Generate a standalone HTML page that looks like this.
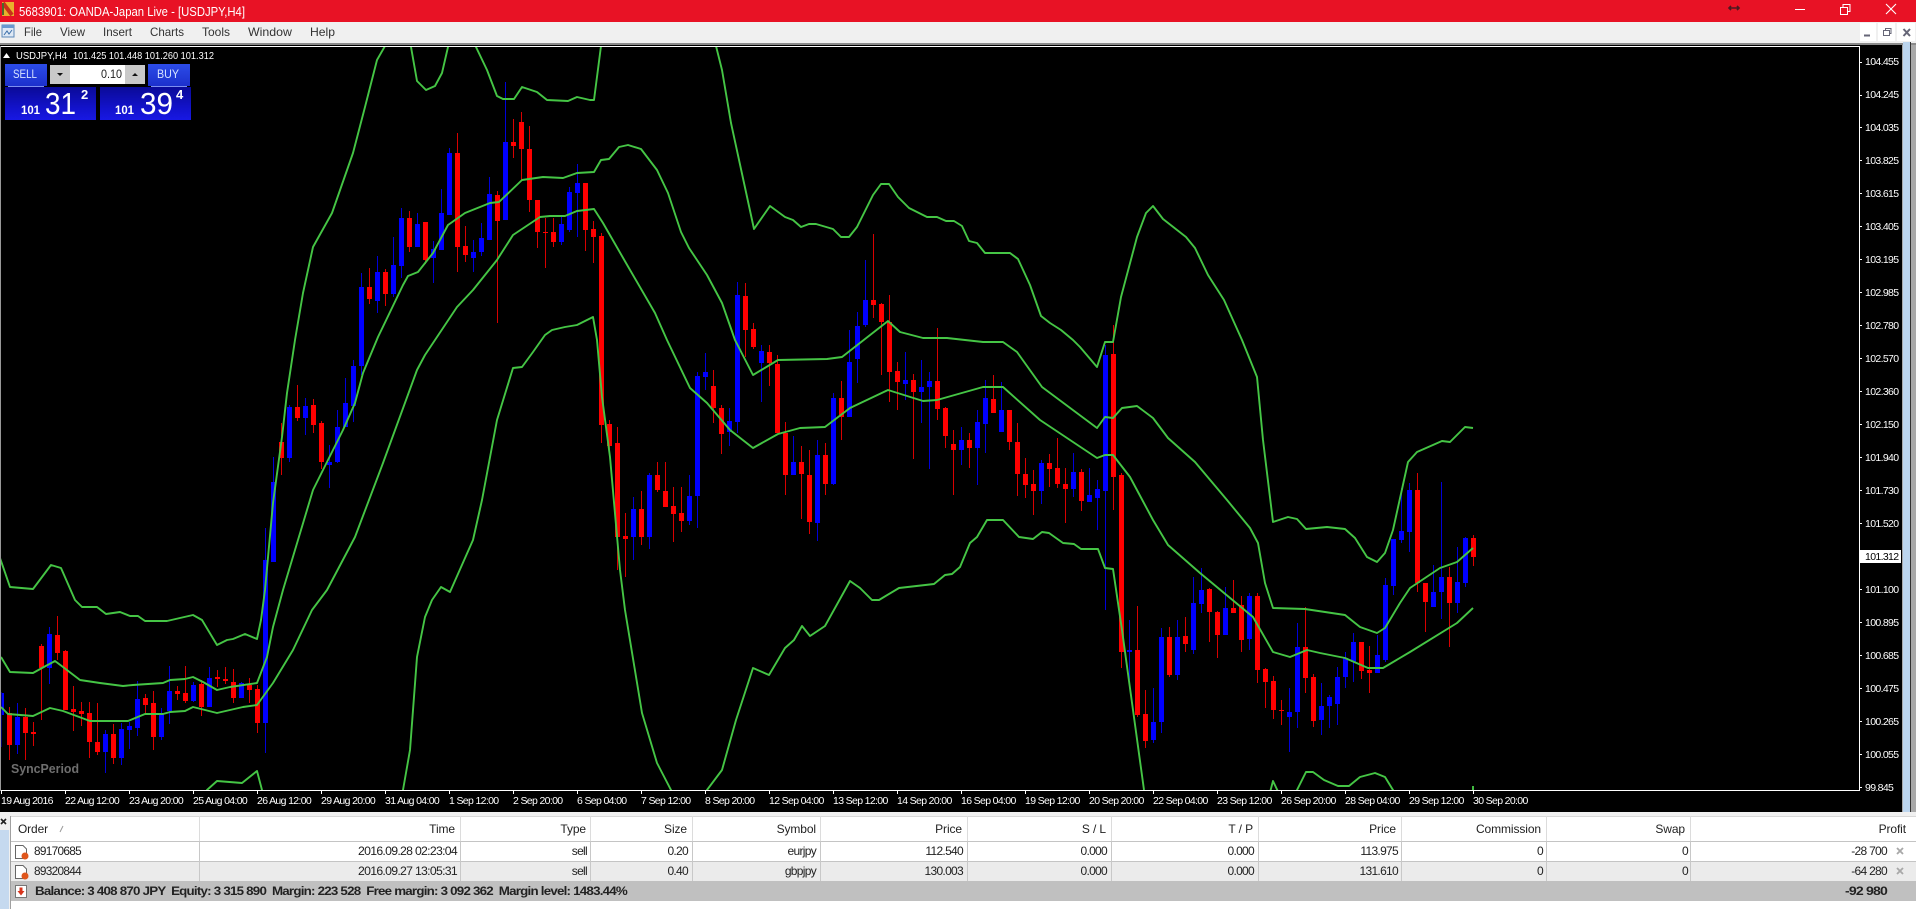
<!DOCTYPE html>
<html><head><meta charset="utf-8"><title>USDJPY,H4</title>
<style>
html,body{margin:0;padding:0;background:#fff;width:1916px;height:909px;overflow:hidden}
svg{display:block;font-family:"Liberation Sans",Arial,sans-serif}
.a{font-size:10.5px;letter-spacing:-.65px;fill:#fff}
.t{font-size:12px;fill:#222;letter-spacing:-.7px}
.h{font-size:12px;fill:#222;letter-spacing:-.1px}
.e{text-anchor:end}
.m{font-size:12px;fill:#333}
.b{font-weight:bold}
</style></head><body>
<svg width="1916" height="909" viewBox="0 0 1916 909" xmlns="http://www.w3.org/2000/svg">
<defs>
<linearGradient id="pb" x1="0" y1="0" x2="0" y2="1"><stop offset="0" stop-color="#0a0a98"/><stop offset=".6" stop-color="#1212c8"/><stop offset="1" stop-color="#1818e4"/></linearGradient>
<linearGradient id="bb" x1="0" y1="0" x2="0" y2="1"><stop offset="0" stop-color="#2c4ce8"/><stop offset="1" stop-color="#1c30cc"/></linearGradient>
<clipPath id="cc"><rect x="1" y="47" width="1858" height="743"/></clipPath>
</defs>

<!-- window chrome -->
<rect width="1916" height="909" fill="#fff"/>
<rect width="1916" height="22" fill="#e81225"/>
<polygon points="2,2 14,2 14,16 2,16" fill="#e9b02c"/>
<path d="M3 3L12 15" stroke="#c8321a" stroke-width="4"/>
<path d="M3 3V15" stroke="#4a6a2a" stroke-width="2"/>
<text x="19" y="16" font-size="13" fill="#fff" textLength="226" lengthAdjust="spacingAndGlyphs">5683901: OANDA-Japan Live - [USDJPY,H4]</text>
<path d="M1729 8H1739M1731 6L1729 8L1731 10M1737 6L1739 8L1737 10" stroke="#4a1a20" stroke-width="1.6" fill="none"/>
<path d="M1795 9.500H1805" stroke="#fff"/>
<path d="M1840.500 7.500H1847.500V14.500H1840.500ZM1843 7V4.500H1850V11.500H1848" stroke="#fff" fill="none"/>
<path d="M1886 4L1896 14M1896 4L1886 14" stroke="#fff" stroke-width="1.1"/>

<rect y="22" width="1916" height="21" fill="#f0f0f0"/>
<rect y="43" width="1916" height="2" fill="#8a8a8a"/>
<rect x="2" y="25" width="12" height="12" fill="#dfe9f5" stroke="#5b88b8"/>
<rect x="2" y="25" width="12" height="3" fill="#6a9ad0"/>
<path d="M4 35L7 31L9 34L12 30" stroke="#3a6ea8" fill="none"/>
<text class="m" x="24" y="36" textLength="18" lengthAdjust="spacingAndGlyphs">File</text>
<text class="m" x="60" y="36" textLength="25" lengthAdjust="spacingAndGlyphs">View</text>
<text class="m" x="103" y="36" textLength="29" lengthAdjust="spacingAndGlyphs">Insert</text>
<text class="m" x="150" y="36" textLength="34" lengthAdjust="spacingAndGlyphs">Charts</text>
<text class="m" x="202" y="36" textLength="28" lengthAdjust="spacingAndGlyphs">Tools</text>
<text class="m" x="248" y="36" textLength="44" lengthAdjust="spacingAndGlyphs">Window</text>
<text class="m" x="310" y="36" textLength="25" lengthAdjust="spacingAndGlyphs">Help</text>
<rect x="1860" y="23" width="16" height="18" fill="#fff"/>
<rect x="1878" y="23" width="17" height="18" fill="#fff"/>
<rect x="1897" y="23" width="18" height="18" fill="#fff"/>
<path d="M1864 35.500H1870" stroke="#667" stroke-width="2"/>
<path d="M1883.500 30.500H1889.500V35.500H1883.500ZM1885.500 30V28.500H1891V33.500H1890" stroke="#667" fill="none"/>
<path d="M1903.500 29L1910 36M1910 29L1903.500 36" stroke="#667" stroke-width="2"/>

<!-- side strip -->
<rect x="1902" y="45" width="14" height="768" fill="#a9a9a9"/>
<rect x="1903" y="42" width="7" height="771" fill="#bcd5ee"/>
<rect x="1910" y="42" width="1" height="771" fill="#333"/>

<!-- chart -->
<rect x="0" y="45" width="1902" height="767" fill="#000"/>
<path d="M1 46.500H1859.500V790.500H1" stroke="#fff" fill="none"/>
<path d="M.5 46V791" stroke="#999"/>

<g transform="translate(.5 0)" clip-path="url(#cc)" shape-rendering="crispEdges" fill="none">
<path stroke="#d80000" d="M9 707V760M25 708V760M33 722V746M41 644V720M57 616V660M65 650V710M73 686V731M81 702V726M89 702V758M97 703V755M113 724V764M145 694V715M153 691V750M177 686V700M185 666V703M201 680V716M217 670V687M225 667V684M233 669V703M249 678V703M257 685V733M281 423V475M297 385V421M313 399V433M321 421V469M369 268V304M385 269V306M409 211V252M425 222V264M457 133V272M465 226V262M497 191V323M513 119V158M521 112V180M529 126V212M537 200V248M545 218V268M553 218V247M585 183V251M593 221V263M601 233V443M609 420V450M617 427V570M625 513V577M641 491V545M657 462V492M665 462V507M673 487V542M681 487V532M713 370V423M721 405V454M745 283V357M753 323V349M769 345V386M777 355V433M785 422V495M801 446V519M809 450V534M825 443V495M841 381V440M873 234V318M881 303V375M889 295V402M897 362V410M913 374V459M937 328V420M945 407V448M953 430V495M969 433V468M993 375V413M1009 410V450M1017 423V496M1025 458V498M1033 470V515M1049 454V487M1057 438V488M1065 468V523M1081 469V511M1113 325V510M1121 473V668M1137 606V717M1145 690V748M1169 627V677M1185 617V652M1209 588V642M1217 611V658M1233 580V613M1241 596V652M1257 593V683M1265 668V708M1273 676V719M1281 700V725M1305 607V693M1313 674V727M1361 642V679M1369 646V693M1417 473V592M1425 583V632M1449 567V647M1473 535V566"/>
<path stroke="#0000d8" d="M1 692V747M17 703V754M49 627V684M105 730V773M121 723V765M129 722V749M137 681V736M161 708V740M169 666V724M193 682V702M209 667V707M241 682V698M265 528V753M273 457V562M289 405V462M305 398V435M329 445V488M337 410V463M345 378V427M353 360V422M361 273V375M377 256V313M393 237V297M401 208V278M417 213V247M433 241V283M441 189V250M449 148V215M473 240V272M481 223V256M489 177V240M505 82V220M561 217V245M569 187V232M577 164V237M633 497V560M649 473V549M689 475V525M697 372V528M705 353V390M729 408V446M737 282V433M761 345V402M793 436V475M817 440V541M833 393V485M849 330V417M857 312V383M865 260V327M905 352V400M921 360V423M929 372V469M961 427V465M977 410V485M985 380V453M1001 382V432M1041 460V504M1073 453V497M1089 468V502M1097 480V530M1105 345V610M1129 620V680M1153 688V743M1161 628V733M1177 620V680M1193 577V654M1201 568V613M1225 587V635M1249 593V650M1289 688V752M1297 623V728M1321 683V735M1329 695V728M1337 667V725M1345 652V688M1353 633V682M1377 635V673M1385 578V662M1393 539V595M1401 488V543M1409 483V552M1433 565V607M1441 482V619M1457 547V613M1465 537V587"/>
<path stroke="#ff0000" stroke-width="5" d="M9 713V745M25 717V733M33 732V734M41 646V668M57 635V653M65 651V710M73 709V712M81 711V714M89 713V742M97 742V752M113 734V758M145 698V705M153 703V737M177 691V694M185 693V701M201 684V707M217 677V679M225 679V681M233 682V698M249 685V690M257 689V723M281 442V458M297 407V418M313 405V425M321 423V462M369 287V299M385 272V294M409 218V247M425 222V260M457 153V247M465 246V255M497 195V221M513 142V146M521 122V149M529 149V200M537 200V232M545 232V233M553 232V242M585 183V230M593 229V237M601 236V425M609 424V446M617 443V537M625 536V539M641 509V537M657 475V490M665 491V507M673 506V514M681 513V521M713 386V408M721 408V434M745 296V330M753 329V347M769 352V363M777 364V433M785 433V475M801 462V474M809 475V522M825 455V484M841 398V417M873 300V305M881 304V322M889 322V372M897 371V382M913 380V392M937 381V409M945 408V436M953 444V450M969 440V448M993 399V413M1009 410V442M1017 442V474M1025 474V485M1033 484V491M1049 463V469M1057 468V484M1065 484V489M1081 472V501M1113 354V477M1121 475V652M1137 650V715M1145 714V741M1169 637V675M1185 636V644M1209 589V612M1217 612V635M1233 608V613M1241 605V640M1257 596V670M1265 669V682M1273 681V710M1281 710V711M1305 647V678M1313 677V721M1361 642V671M1369 670V673M1417 490V583M1425 583V602M1449 577V603M1473 538V557"/>
<path stroke="#0000ff" stroke-width="5" d="M1 693V715M17 717V745M49 634V668M105 734V752M121 729V758M129 726V730M137 699V728M161 713V737M169 691V711M193 685V701M209 678V707M241 683V698M265 560V723M273 482V562M289 407V458M305 406V418M329 462V465M337 427V462M345 403V427M353 366V406M361 287V366M377 272V301M393 265V294M401 218V266M417 224V247M433 249V258M441 213V250M449 153V215M473 252V258M481 238V252M489 194V240M505 142V220M561 224V242M569 192V230M577 183V193M633 509V537M649 475V537M689 496V521M697 376V496M705 372V377M729 421V432M737 295V422M761 351V363M793 462V475M817 455V523M833 398V484M849 362V417M857 326V359M865 300V325M905 380V384M921 387V392M929 381V387M961 440V450M977 422V448M985 398V424M1001 410V432M1041 463V491M1073 472V489M1089 495V502M1097 489V498M1105 355V491M1129 650V652M1153 722V740M1161 637V722M1177 637V675M1193 603V650M1201 590V604M1225 608V635M1249 596V639M1289 712V717M1297 647V712M1321 706V720M1329 697V706M1337 677V704M1345 658V677M1353 642V662M1377 655V673M1385 585V660M1393 539V586M1401 531V540M1409 490V532M1433 592V607M1441 577V592M1457 582V603M1465 538V583"/>
</g>

<g clip-path="url(#cc)" fill="none" stroke="#45c545" stroke-width="1.9" stroke-linejoin="round">
<polyline points="0,558 10,587 33,589 51,565 61,568 75,600 82,607 97,607 106,614 120,612 130,616 138,616 145,621 167,621 193,615 202,620 217,645 227,640 233,639 245,634 257,639 261,620 265,590 273,503 282,437 287,393 295,340 303,293 313,247 332,213 353,153 365,107 377,60 385,46 395,20 405,20 411,47 417,81 426,90 435,86 442,73 448,47 455,20 470,20 476,47 487,70 497,96 503,99 514,99 522,87 537,92 547,100 568,101 577,97 590,100 594,100 601,46 605,20 712,20 716,46 722,70 731,123 754,229 770,206 785,217 793,220 801,227 809,224 816,224 833,229 841,237 849,237 857,227 873,195 881,184 889,184 898,197 909,208 927,217 937,217 946,221 954,221 962,226 969,241 977,243 985,253 1010,253 1018,259 1030,285 1041,316 1050,323 1061,330 1073,340 1080,347 1097,367 1105,342 1113,342 1121,297 1137,237 1146,213 1153,206 1163,219 1186,237 1195,248 1208,275 1224,300 1242,340 1257,377 1263,440 1273,522 1288,517 1297,519 1306,529 1327,527 1345,529 1355,538 1367,557 1377,562 1385,553 1393,530 1408,462 1417,452 1442,441 1450,442 1465,427 1473,428"/>
<polyline points="1,657 10,672 33,673 42,668 55,661 63,667 80,680 100,683 123,686 133,685 163,683 170,680 185,679 193,677 203,682 217,690 230,687 257,683 267,657 273,627 283,590 313,490 328,460 343,430 355,403 363,373 378,337 403,285 408,276 418,272 433,253 448,225 465,213 490,203 499,202 522,180 543,177 563,178 577,173 594,172 601,160 609,159 619,147 628,145 641,149 657,170 668,193 681,232 689,248 707,275 722,303 735,340 753,375 778,360 827,359 842,357 888,321 900,332 923,338 947,338 983,342 1003,342 1017,352 1042,387 1097,428 1105,417 1113,418 1122,408 1137,406 1153,418 1168,438 1195,462 1227,500 1250,528 1258,543 1265,583 1273,608 1305,609 1345,615 1360,627 1377,633 1385,628 1400,603 1410,588 1440,568 1457,562 1473,548"/>
<polyline points="1,707 8,714 33,716 50,708 63,711 90,721 128,721 145,714 163,714 170,712 185,711 193,707 217,713 243,707 257,705 273,683 293,650 312,610 327,590 355,537 383,463 417,370 425,355 435,340 457,307 473,290 497,260 513,235 540,217 550,216 565,216 577,211 594,209 603,223 626,263 655,313 667,340 690,388 707,403 730,430 753,448 778,434 800,428 825,427 850,408 888,390 923,401 937,400 983,387 1003,387 1040,420 1097,458 1105,455 1113,455 1130,477 1153,520 1168,545 1200,573 1253,617 1273,652 1290,657 1307,650 1320,653 1345,658 1368,668 1383,668 1410,652 1457,623 1473,608"/>
<polyline points="200,800 207,790 217,781 242,783 257,771 262,790 265,800"/>
<polyline points="400,800 403,790 410,750 417,657 425,617 432,600 441,587 450,592 473,540 482,500 497,420 513,368 522,367 533,352 545,335 552,330 565,327 577,325 593,317 597,340 602,397 610,457 620,570 625,610 642,713 657,763 671,790 676,800"/>
<polyline points="702,800 707,790 722,770 736,720 753,668 769,675 785,648 794,640 802,626 810,636 825,626 835,608 850,581 860,588 872,600 879,600 899,588 934,584 945,575 952,574 960,567 970,543 977,537 987,520 1003,520 1019,537 1033,539 1042,532 1049,533 1063,543 1074,544 1081,549 1098,549 1105,568 1113,569 1122,630 1144,790 1146,800"/>
<polyline points="1268,800 1273,781 1282,800"/>
<polyline points="1294,800 1297,790 1306,772 1313,772 1324,780 1338,786 1349,786 1360,777 1375,773 1385,777 1393,790 1396,800"/>
<polyline points="1473,786 1473,800"/>
</g>

<text x="11" y="773" font-size="13" font-weight="bold" fill="#6e6e6e" textLength="68" lengthAdjust="spacingAndGlyphs">SyncPeriod</text>

<!-- chart header -->
<path d="M3 58L6.500 53L10 58Z" fill="#fff"/>
<text class="a" x="16" y="59" style="letter-spacing:0" textLength="51" lengthAdjust="spacingAndGlyphs">USDJPY,H4</text>
<text class="a" x="73" y="59" style="letter-spacing:0" textLength="141" lengthAdjust="spacingAndGlyphs">101.425 101.448 101.260 101.312</text>

<!-- one click panel -->
<rect x="5" y="64" width="42" height="22" fill="url(#bb)"/>
<rect x="148" y="64" width="42" height="22" fill="url(#bb)"/>
<path d="M8 86.500H44M151 86.500H187" stroke="#7d8ff0"/>
<rect x="50" y="65" width="95" height="19" fill="#c9c9c9"/>
<rect x="70" y="65" width="55" height="19" fill="#fff"/>
<path d="M57 73H63L60 76ZM132 76H138L135 73Z" fill="#111"/>
<text x="122" y="78" font-size="12" fill="#222" text-anchor="end" textLength="21" lengthAdjust="spacingAndGlyphs">0.10</text>
<text x="13" y="78" font-size="12" fill="#d8e4ff" textLength="24" lengthAdjust="spacingAndGlyphs">SELL</text>
<text x="157" y="78" font-size="12" fill="#d8e4ff" textLength="22" lengthAdjust="spacingAndGlyphs">BUY</text>
<rect x="5" y="87" width="91" height="33" fill="url(#pb)"/>
<rect x="100" y="87" width="91" height="33" fill="url(#pb)"/>
<g fill="#fff">
<text x="21" y="114" font-size="12" font-weight="bold" textLength="19" lengthAdjust="spacingAndGlyphs">101</text>
<text x="45" y="114" font-size="31" textLength="31" lengthAdjust="spacingAndGlyphs">31</text>
<text x="81" y="99" font-size="13" font-weight="bold">2</text>
<text x="115" y="114" font-size="12" font-weight="bold" textLength="19" lengthAdjust="spacingAndGlyphs">101</text>
<text x="140" y="114" font-size="31" textLength="33" lengthAdjust="spacingAndGlyphs">39</text>
<text x="176" y="99" font-size="13" font-weight="bold">4</text>
</g>

<!-- price axis -->
<path stroke="#fff" d="M1859 62.500H1862M1859 95.500H1862M1859 127.500H1862M1859 160.500H1862M1859 193.500H1862M1859 226.500H1862M1859 259.500H1862M1859 292.500H1862M1859 325.500H1862M1859 358.500H1862M1859 391.500H1862M1859 424.500H1862M1859 457.500H1862M1859 490.500H1862M1859 523.500H1862M1859 589.500H1862M1859 622.500H1862M1859 655.500H1862M1859 688.500H1862M1859 721.500H1862M1859 754.500H1862M1859 787.500H1862"/>
<text class="a" x="1865" y="65">104.455</text><text class="a" x="1865" y="98">104.245</text><text class="a" x="1865" y="131">104.035</text><text class="a" x="1865" y="164">103.825</text><text class="a" x="1865" y="197">103.615</text><text class="a" x="1865" y="230">103.405</text><text class="a" x="1865" y="263">103.195</text><text class="a" x="1865" y="296">102.985</text><text class="a" x="1865" y="329">102.780</text><text class="a" x="1865" y="362">102.570</text><text class="a" x="1865" y="395">102.360</text><text class="a" x="1865" y="428">102.150</text><text class="a" x="1865" y="461">101.940</text><text class="a" x="1865" y="494">101.730</text><text class="a" x="1865" y="527">101.520</text><text class="a" x="1865" y="593">101.100</text><text class="a" x="1865" y="626">100.895</text><text class="a" x="1865" y="659">100.685</text><text class="a" x="1865" y="692">100.475</text><text class="a" x="1865" y="725">100.265</text><text class="a" x="1865" y="758">100.055</text><text class="a" x="1865" y="791">99.845</text>
<rect x="1860" y="550" width="41" height="13" fill="#fff"/>
<text class="a" x="1865" y="560" style="fill:#000">101.312</text>

<!-- time axis -->
<path stroke="#fff" d="M1.500 790V794M65.500 790V794M129.500 790V794M193.500 790V794M257.500 790V794M321.500 790V794M385.500 790V794M449.500 790V794M513.500 790V794M577.500 790V794M641.500 790V794M705.500 790V794M769.500 790V794M833.500 790V794M897.500 790V794M961.500 790V794M1025.500 790V794M1089.500 790V794M1153.500 790V794M1217.500 790V794M1281.500 790V794M1345.500 790V794M1409.500 790V794M1473.500 790V794"/>
<text class="a" x="1" y="804">19 Aug 2016</text><text class="a" x="65" y="804">22 Aug 12:00</text><text class="a" x="129" y="804">23 Aug 20:00</text><text class="a" x="193" y="804">25 Aug 04:00</text><text class="a" x="257" y="804">26 Aug 12:00</text><text class="a" x="321" y="804">29 Aug 20:00</text><text class="a" x="385" y="804">31 Aug 04:00</text><text class="a" x="449" y="804">1 Sep 12:00</text><text class="a" x="513" y="804">2 Sep 20:00</text><text class="a" x="577" y="804">6 Sep 04:00</text><text class="a" x="641" y="804">7 Sep 12:00</text><text class="a" x="705" y="804">8 Sep 20:00</text><text class="a" x="769" y="804">12 Sep 04:00</text><text class="a" x="833" y="804">13 Sep 12:00</text><text class="a" x="897" y="804">14 Sep 20:00</text><text class="a" x="961" y="804">16 Sep 04:00</text><text class="a" x="1025" y="804">19 Sep 12:00</text><text class="a" x="1089" y="804">20 Sep 20:00</text><text class="a" x="1153" y="804">22 Sep 04:00</text><text class="a" x="1217" y="804">23 Sep 12:00</text><text class="a" x="1281" y="804">26 Sep 20:00</text><text class="a" x="1345" y="804">28 Sep 04:00</text><text class="a" x="1409" y="804">29 Sep 12:00</text><text class="a" x="1473" y="804">30 Sep 20:00</text>

<!-- terminal -->
<rect y="812" width="1916" height="97" fill="#fff"/>
<rect y="812" width="1916" height="4" fill="#f0f0f0"/>
<rect y="816" width="10" height="93" fill="#f0f0f0"/>
<rect y="830" width="9" height="79" fill="#c5d9ef"/>
<path d="M1 819L6 824M6 819L1 824" stroke="#222" stroke-width="1.6"/>
<rect x="10" y="816" width="1" height="93" fill="#a0a0a0"/>
<rect x="11" y="816" width="1905" height="1" fill="#d8d8d8"/>
<rect x="11" y="841" width="1905" height="20" fill="#fff"/>
<rect x="11" y="861" width="1905" height="20" fill="#ebebeb"/>
<rect x="11" y="881" width="1905" height="20" fill="#c0c0c0"/>
<path stroke="#c4c4c4" d="M11 841.500H1916M11 861.500H1916"/>
<path stroke="#dcdcdc" d="M199.500 816V841M460.500 816V841M590.500 816V841M692.500 816V841M820.500 816V841M967.500 816V841M1111.500 816V841M1258.500 816V841M1401.500 816V841M1546.500 816V841M1690.500 816V841"/>
<path stroke="#c8c8c8" d="M199.500 841V881M460.500 841V881M590.500 841V881M692.500 841V881M820.500 841V881M967.500 841V881M1111.500 841V881M1258.500 841V881M1401.500 841V881M1546.500 841V881M1690.500 841V881"/>

<text class="h" x="18" y="833" textLength="30" lengthAdjust="spacingAndGlyphs">Order</text>
<path d="M60 832L63 826" stroke="#999"/>
<text class="h e" x="455" y="833">Time</text>
<text class="h e" x="586" y="833">Type</text>
<text class="h e" x="687" y="833">Size</text>
<text class="h e" x="816" y="833">Symbol</text>
<text class="h e" x="962" y="833">Price</text>
<text class="h e" x="1106" y="833">S / L</text>
<text class="h e" x="1253" y="833">T / P</text>
<text class="h e" x="1396" y="833">Price</text>
<text class="h e" x="1541" y="833">Commission</text>
<text class="h e" x="1685" y="833">Swap</text>
<text class="h e" x="1906" y="833">Profit</text>

<path d="M15.500 845.500H23L26.500 849V858.500H15.500Z" fill="#fff" stroke="#666"/>
<circle cx="25" cy="856" r="3.500" fill="#e0561c"/>
<text class="t" x="34" y="855" textLength="47" lengthAdjust="spacingAndGlyphs">89170685</text>
<text class="t e" x="457" y="855" textLength="99" lengthAdjust="spacingAndGlyphs">2016.09.28 02:23:04</text>
<text class="t e" x="587" y="855">sell</text>
<text class="t e" x="688" y="855">0.20</text>
<text class="t e" x="816" y="855">eurjpy</text>
<text class="t e" x="963" y="855">112.540</text>
<text class="t e" x="1107" y="855">0.000</text>
<text class="t e" x="1254" y="855">0.000</text>
<text class="t e" x="1398" y="855">113.975</text>
<text class="t e" x="1543" y="855">0</text>
<text class="t e" x="1688" y="855">0</text>
<text class="t e" x="1887" y="855">-28 700</text>
<path d="M1897 848L1903 854M1903 848L1897 854" stroke="#a8a8a8" stroke-width="1.8"/>

<path d="M15.500 865.500H23L26.500 869V878.500H15.500Z" fill="#fff" stroke="#666"/>
<circle cx="25" cy="876" r="3.500" fill="#e0561c"/>
<text class="t" x="34" y="875" textLength="47" lengthAdjust="spacingAndGlyphs">89320844</text>
<text class="t e" x="457" y="875" textLength="99" lengthAdjust="spacingAndGlyphs">2016.09.27 13:05:31</text>
<text class="t e" x="587" y="875">sell</text>
<text class="t e" x="688" y="875">0.40</text>
<text class="t e" x="816" y="875">gbpjpy</text>
<text class="t e" x="963" y="875">130.003</text>
<text class="t e" x="1107" y="875">0.000</text>
<text class="t e" x="1254" y="875">0.000</text>
<text class="t e" x="1398" y="875">131.610</text>
<text class="t e" x="1543" y="875">0</text>
<text class="t e" x="1688" y="875">0</text>
<text class="t e" x="1887" y="875">-64 280</text>
<path d="M1897 868L1903 874M1903 868L1897 874" stroke="#a8a8a8" stroke-width="1.8"/>

<rect x="15.500" y="885.500" width="11" height="12" fill="#fff" stroke="#777"/>
<path d="M19.500 887.500H22.500V891H24.500L21 895.500L17.500 891H19.500Z" fill="#d8341c"/>
<text class="t b" x="35" y="895" style="font-size:12px" textLength="592" lengthAdjust="spacingAndGlyphs" xml:space="preserve">Balance: 3 408 870 JPY  Equity: 3 315 890  Margin: 223 528  Free margin: 3 092 362  Margin level: 1483.44%</text>
<text class="t b e" x="1887" y="895" textLength="42" lengthAdjust="spacingAndGlyphs">-92 980</text>
</svg>
</body></html>
